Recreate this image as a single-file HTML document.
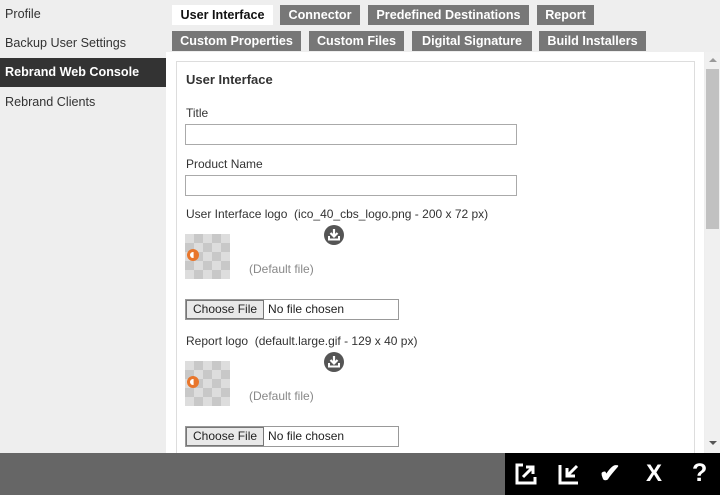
<!DOCTYPE html>
<html><head><style>
*{margin:0;padding:0;box-sizing:border-box}
body{width:720px;height:495px;background:#eee;font-family:"Liberation Sans",Arial,sans-serif;position:relative;overflow:hidden;font-size:12px;color:#222}
.a{position:absolute}
.nav{left:0;width:166px;height:29px;padding-left:5px;line-height:29px;font-size:12.6px;color:#333}
.tab{height:20px;line-height:20px;background:#777;color:#fff;font-weight:bold;font-size:12.6px;text-align:center}
.tab.on{background:#fff;color:#111}
.lbl{left:186px;font-size:12px;color:#333}
.inp{left:185px;width:332px;height:21px;border:1px solid #aaa;background:#fff}
.img{left:185px;width:45px;height:45px;background-color:#ddd;background-image:linear-gradient(45deg,#c8c8c8 25%,transparent 25%,transparent 75%,#c8c8c8 75%),linear-gradient(45deg,#c8c8c8 25%,transparent 25%,transparent 75%,#c8c8c8 75%);background-size:18px 18px;background-position:0 0,9px 9px}
.c{position:absolute;left:2px;top:15px;width:12px;height:12px;border-radius:50%;background:#e8762c}
.c:after{content:"";position:absolute;left:3px;top:3px;width:6px;height:6px;border-radius:50%;background:#fff;clip-path:polygon(0 0,60% 0,60% 100%,0 100%)}
.dl{left:324px;width:20px;height:20px;border-radius:50%;background:#555}
.df{left:249px;color:#888;font-size:12px}
.fi{left:185px;width:214px;height:21px;border:1px solid #999;background:#fff;font-size:12px}
.fi span{display:inline-block;height:19px;line-height:17px;padding:0 6px;background:#e9e9e9;border:1px solid #777;margin-right:4px}
</style></head><body>
<div class="a nav" style="top:0">Profile</div>
<div class="a nav" style="top:29px">Backup User Settings</div>
<div class="a nav" style="top:58px;background:#333;color:#fff;font-weight:bold">Rebrand Web Console</div>
<div class="a nav" style="top:88px">Rebrand Clients</div>

<div class="a tab on" style="left:172px;top:5px;width:101px">User Interface</div>
<div class="a tab" style="left:280px;top:5px;width:80px">Connector</div>
<div class="a tab" style="left:368px;top:5px;width:161px">Predefined Destinations</div>
<div class="a tab" style="left:537px;top:5px;width:57px">Report</div>
<div class="a tab" style="left:172px;top:31px;width:129px">Custom Properties</div>
<div class="a tab" style="left:309px;top:31px;width:95px">Custom Files</div>
<div class="a tab" style="left:412px;top:31px;width:120px">Digital Signature</div>
<div class="a tab" style="left:539px;top:31px;width:107px">Build Installers</div>

<div class="a" style="left:166px;top:52px;width:538px;height:401px;background:#fff"></div>
<div class="a" style="left:176px;top:61px;width:519px;height:400px;border:1px solid #ddd;background:#fff"></div>
<div class="a" style="left:705px;top:52px;width:15px;height:401px;background:#f0f0f0"></div>
<div class="a" style="left:706px;top:69px;width:13px;height:160px;background:#c1c1c1"></div>
<div class="a" style="left:709px;top:58px;width:0;height:0;border:4px solid transparent;border-bottom-color:#999;border-top:0"></div>
<div class="a" style="left:709px;top:441px;width:0;height:0;border:4px solid transparent;border-top-color:#555;border-bottom:0"></div>

<div class="a" style="left:186px;top:72px;font-weight:bold;font-size:13px;color:#333">User Interface</div>
<div class="a lbl" style="top:106px">Title</div>
<div class="a inp" style="top:124px"></div>
<div class="a lbl" style="top:157px">Product Name</div>
<div class="a inp" style="top:175px"></div>
<div class="a lbl" style="top:207px">User Interface logo&nbsp; (ico_40_cbs_logo.png - 200 x 72 px)</div>
<svg class="a dl" style="top:225px" viewBox="0 0 20 20"><path d="M10 4v7M6.5 8l3.5 3.5L13.5 8" stroke="#fff" stroke-width="2.2" fill="none"/><path d="M5 11v3.5h10V11" stroke="#fff" stroke-width="2" fill="none"/></svg>
<div class="a img" style="top:234px"><div class="c"></div></div>
<div class="a df" style="top:262px">(Default file)</div>
<div class="a fi" style="top:299px"><span>Choose File</span>No file chosen</div>
<div class="a lbl" style="top:334px">Report logo&nbsp; (default.large.gif - 129 x 40 px)</div>
<svg class="a dl" style="top:352px" viewBox="0 0 20 20"><path d="M10 4v7M6.5 8l3.5 3.5L13.5 8" stroke="#fff" stroke-width="2.2" fill="none"/><path d="M5 11v3.5h10V11" stroke="#fff" stroke-width="2" fill="none"/></svg>
<div class="a img" style="top:361px"><div class="c"></div></div>
<div class="a df" style="top:389px">(Default file)</div>
<div class="a fi" style="top:426px"><span>Choose File</span>No file chosen</div>

<div class="a" style="left:0;top:453px;width:720px;height:42px;background:#666"></div>
<div class="a" style="left:505px;top:453px;width:215px;height:42px;background:#000"></div>
<svg class="a" style="left:514px;top:462px" width="24" height="24" viewBox="0 0 24 24"><path d="M9 3H3v18h18v-6" stroke="#fff" stroke-width="3" fill="none"/><path d="M9 15L19 5M12 5h7v7" stroke="#fff" stroke-width="3" fill="none"/></svg>
<svg class="a" style="left:557px;top:462px" width="24" height="24" viewBox="0 0 24 24"><path d="M3 3v18h18" stroke="#fff" stroke-width="3" fill="none"/><path d="M20 4L11 13M10 6v8h8" stroke="#fff" stroke-width="3" fill="none"/></svg>
<div class="a" style="left:599px;top:458px;color:#fff;font-size:26px;font-weight:bold">✔</div>
<div class="a" style="left:646px;top:460px;color:#fff;font-size:24px;font-weight:bold">X</div>
<div class="a" style="left:692px;top:459px;color:#fff;font-size:25px;font-weight:bold">?</div>
</body></html>
